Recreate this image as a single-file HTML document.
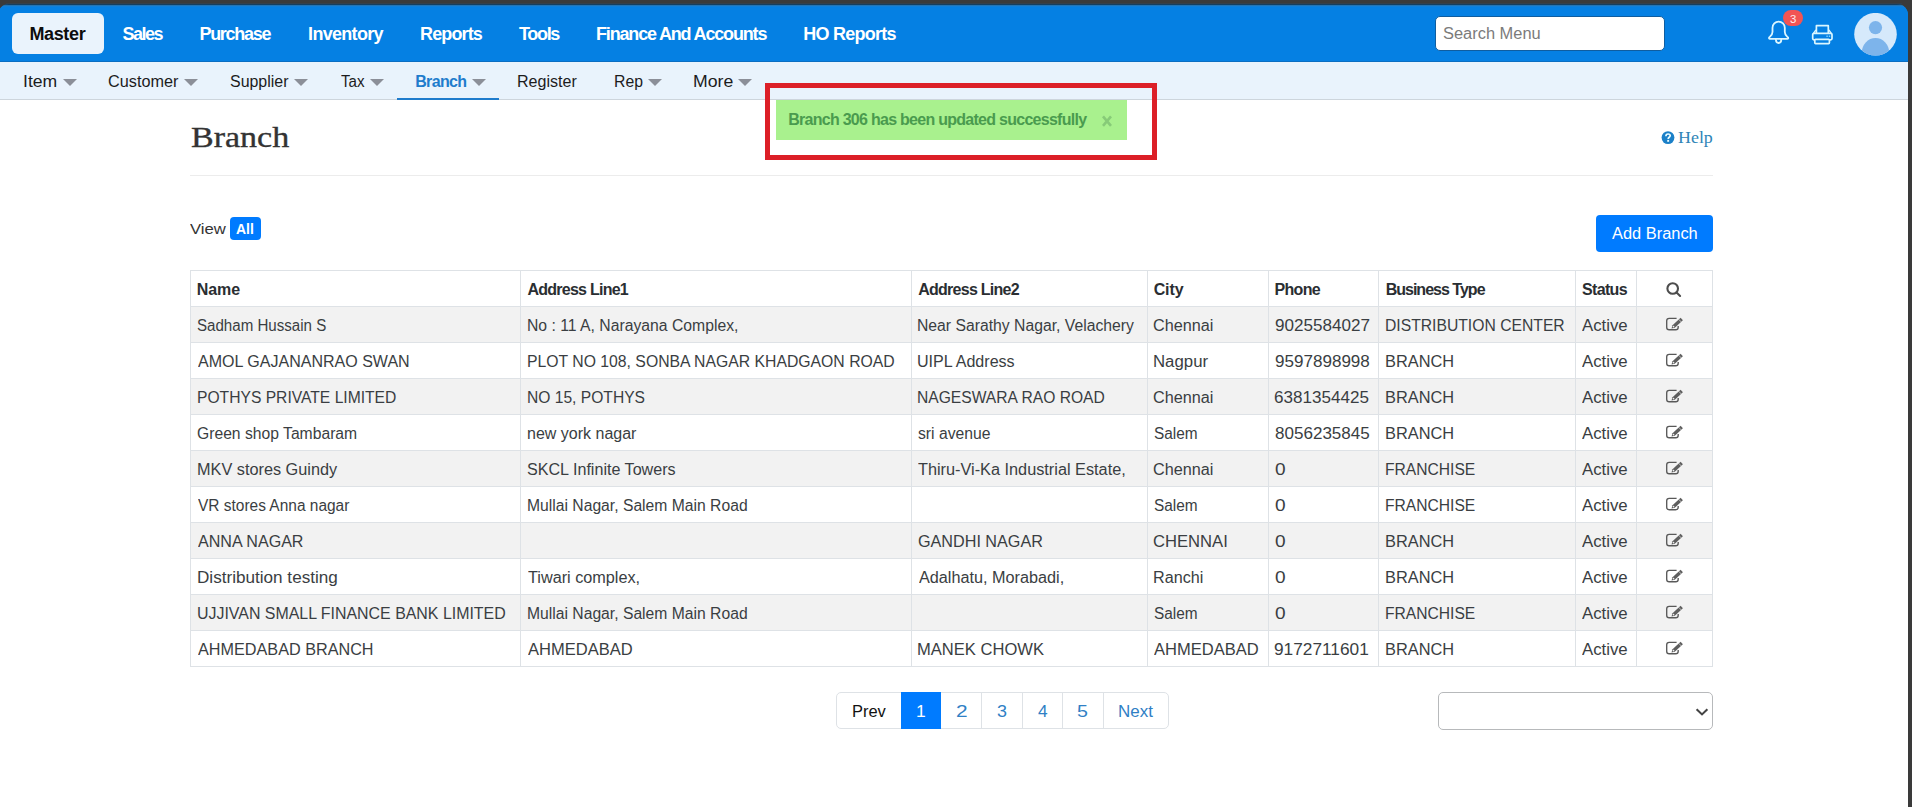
<!DOCTYPE html>
<html lang="en">
<head>
<meta charset="utf-8">
<title>Branch</title>
<style>
*{box-sizing:border-box;margin:0;padding:0}
html,body{width:1912px;height:807px;overflow:hidden;background:#3a3a3a;font-family:"Liberation Sans",sans-serif}
#page{position:absolute;left:-2px;top:4px;width:1910px;height:803px;background:linear-gradient(to bottom,#0e5fa6 0,#0580e3 3px,#0580e3 40px,#fff 40px);border-radius:11px 11px 0 0;overflow:hidden}
#shade{position:absolute;left:6px;top:3px;width:1896px;height:1px;background:#34404b}
#wrap{position:absolute;left:0;top:0;width:1912px;height:807px}
.abs{position:absolute}
.t{position:absolute;white-space:nowrap;transform-origin:0 50%;display:block}
#nav{left:0;top:4px;width:1908px;height:58px;background:linear-gradient(to bottom,#143e60 0,#143e60 1px,#2474b2 1px,#2474b2 2px,#127fd8 2px,#127fd8 3px,#0580e3 3px);border-bottom:1px solid #0a6ec2}
#pill{left:12px;top:13px;width:92px;height:41px;border-radius:6px;background:#eaf3fc}
#search{left:1435px;top:16px;width:230px;height:35px;border-radius:5px;background:#fff;border:1px solid #0f5d9f}
#sub{left:0;top:62px;width:1908px;height:38px;background:#e9f3fc;border-bottom:1px solid #cdd5dc}
.car{position:absolute;top:79px;width:0;height:0;border-left:7px solid transparent;border-right:7px solid transparent;border-top:7px solid #8b8f98}
#ul{left:397px;top:98px;width:102px;height:2px;background:#1f7ccc}
#hr{left:190px;top:175px;width:1523px;height:1px;background:#ececec}
#toast{left:776px;top:100px;width:351px;height:40px;background:#a9f18e}
#red{left:765px;top:83px;width:392px;height:77px;border:5px solid #dc1f27}
#all{left:230px;top:217px;width:31px;height:23px;border-radius:4px;background:#007bff}
#add{left:1596px;top:215px;width:117px;height:37px;border-radius:4px;background:#007bff}
#grid{left:190px;top:270px;border-collapse:collapse;table-layout:fixed;width:1522px}
#grid td{border:1px solid #dee2e6;height:36px}
#grid tr:nth-child(even) td{background:#f2f2f2}
#pg{left:836px;top:692px;width:333px;height:37px;border:1px solid #dee2e6;border-radius:5px;background:#fff}
#pg i{position:absolute;top:0;width:1px;height:35px;background:#dee2e6}
#p1{left:901px;top:692px;width:40px;height:37px;background:#007bff}
#sel{left:1438px;top:692px;width:275px;height:38px;border:1px solid #b7b9bb;border-radius:5px;background:#fff}
.hd{-webkit-text-stroke:0.35px #333}
#badge{left:1783px;top:10px;width:20px;height:16px;border-radius:8px;background:#f25454}
</style>
</head>
<body>
<div id="wrap">
<div id="shade"></div>
<div id="page"><div id="wrap2" class="abs" style="left:2px;top:-4px;width:1912px;height:807px">
<div id="nav" class="abs"></div>
<div id="pill" class="abs"></div>
<div id="search" class="abs"></div>
<!-- bell -->
<svg class="abs" style="left:1766px;top:19px" width="26" height="28" viewBox="0 0 26 28" fill="none" stroke="#dbf6ff" stroke-width="1.8" stroke-linejoin="round" stroke-linecap="round">
<path d="M6.5 13 V8.8 A6.15 6.15 0 0 1 18.8 8.8 V13 C18.8 16 20.5 17 22 18.4 Q22.6 19.8 21.4 19.8 H3.9 Q2.6 19.8 3.2 18.4 C4.8 17 6.5 16 6.5 13 Z"/>
<path d="M9.9 20.6 C9.9 23 11 24 12.6 24 C14.2 24 15.3 23 15.3 20.6"/>
</svg>
<div id="badge" class="abs"></div>
<!-- printer -->
<svg class="abs" style="left:1810px;top:23px" width="25" height="24" viewBox="0 0 25 24" fill="none" stroke="#dbf6ff" stroke-width="1.7" stroke-linejoin="round">
<path d="M6.4 10 V2.7 H18.3 V10"/>
<path d="M5.9 6.8 L3.4 10.3 M18.8 6.8 L21.3 10.3" stroke-width="1.4"/>
<rect x="2.7" y="10.3" width="19.3" height="6.5" rx="1.3"/>
<rect x="4.8" y="16.4" width="14.6" height="4.2" rx="0.8" fill="#0580e3"/>
<path d="M16.4 13.2 H17.8 M18.8 13.2 H20.2" stroke-width="1.5" stroke="#7fd0fb"/>
</svg>
<!-- avatar -->
<svg class="abs" style="left:1854px;top:13px" width="43" height="43" viewBox="0 0 43 43">
<defs><clipPath id="cp"><circle cx="21.5" cy="21.2" r="21.3"/></clipPath></defs>
<circle cx="21.5" cy="21.2" r="21.3" fill="#d6e9fb"/>
<g clip-path="url(#cp)" fill="#7db4eb"><circle cx="21.5" cy="14.6" r="6.6"/><ellipse cx="21.5" cy="40" rx="13.8" ry="15"/></g>
</svg>
<div id="sub" class="abs"></div>
<div class="car" style="left:62.5px"></div>
<div class="car" style="left:184px"></div>
<div class="car" style="left:294.3px"></div>
<div class="car" style="left:369.5px"></div>
<div class="car" style="left:471.5px"></div>
<div class="car" style="left:648px"></div>
<div class="car" style="left:738px"></div>
<div id="ul" class="abs"></div>
<div id="hr" class="abs"></div>
<!-- help icon -->
<svg class="abs" style="left:1661px;top:131px" width="14" height="14" viewBox="0 0 14 14">
<circle cx="7" cy="6.6" r="6.4" fill="#1b80c8"/>
<path d="M4.9 5.2 C4.9 3.6 6 3 7.1 3 C8.3 3 9.2 3.7 9.2 4.8 C9.2 6.3 7.2 6.3 7.2 7.9" fill="none" stroke="#e8fbff" stroke-width="1.7"/>
<rect x="6.2" y="8.9" width="1.9" height="1.9" fill="#e8fbff"/>
</svg>
<div id="toast" class="abs"></div>
<svg class="abs" style="left:1100px;top:114px" width="14" height="14" viewBox="0 0 14 14" stroke="#87cb78" stroke-width="2.6" stroke-linecap="butt"><path d="M3 2.4 L11 11.9 M11 2.4 L3 11.9"/></svg>
<div id="red" class="abs"></div>
<div id="all" class="abs"></div>
<div id="add" class="abs"></div>
<table id="grid" class="abs">
<colgroup><col style="width:330px"><col style="width:391px"><col style="width:236px"><col style="width:121px"><col style="width:110px"><col style="width:197px"><col style="width:61px"><col style="width:76px"></colgroup>
<tr><td></td><td></td><td></td><td></td><td></td><td></td><td></td><td></td></tr>
<tr><td></td><td></td><td></td><td></td><td></td><td></td><td></td><td></td></tr>
<tr><td></td><td></td><td></td><td></td><td></td><td></td><td></td><td></td></tr>
<tr><td></td><td></td><td></td><td></td><td></td><td></td><td></td><td></td></tr>
<tr><td></td><td></td><td></td><td></td><td></td><td></td><td></td><td></td></tr>
<tr><td></td><td></td><td></td><td></td><td></td><td></td><td></td><td></td></tr>
<tr><td></td><td></td><td></td><td></td><td></td><td></td><td></td><td></td></tr>
<tr><td></td><td></td><td></td><td></td><td></td><td></td><td></td><td></td></tr>
<tr><td></td><td></td><td></td><td></td><td></td><td></td><td></td><td></td></tr>
<tr><td></td><td></td><td></td><td></td><td></td><td></td><td></td><td></td></tr>
<tr><td></td><td></td><td></td><td></td><td></td><td></td><td></td><td></td></tr>
</table>
<svg class="abs" style="left:1665px;top:281px" width="18" height="18" viewBox="0 0 18 18" fill="none" stroke="#4d4d4d" stroke-width="2.1"><circle cx="7.7" cy="7.5" r="5.3"/><path d="M11.6 11.4 L15.1 14.9" stroke-linecap="round"/></svg>
<svg class="abs" style="left:1665px;top:316px" width="19" height="16" viewBox="0 0 19 16" fill="none" stroke="#595959" stroke-width="1.35"><path d="M11.6 2.3 H4.2 Q1.7 2.3 1.7 4.8 V11.2 Q1.7 13.75 4.2 13.75 H10.7 Q13.2 13.75 13.2 11.2 V9.9"/><path d="M6.5 12.4 L9.77 11.68 L17.9 4.29 L15.63 1.77 L7.49 9.16 Z" fill="#5e5e5e" stroke="none"/><path d="M13.85 3.38 L16.13 5.9" stroke="#fff" stroke-opacity=".85" stroke-width=".7"/><circle cx="8.5" cy="10.55" r=".85" fill="#fff" fill-opacity=".9" stroke="none"/></svg>
<svg class="abs" style="left:1665px;top:352px" width="19" height="16" viewBox="0 0 19 16" fill="none" stroke="#595959" stroke-width="1.35"><path d="M11.6 2.3 H4.2 Q1.7 2.3 1.7 4.8 V11.2 Q1.7 13.75 4.2 13.75 H10.7 Q13.2 13.75 13.2 11.2 V9.9"/><path d="M6.5 12.4 L9.77 11.68 L17.9 4.29 L15.63 1.77 L7.49 9.16 Z" fill="#5e5e5e" stroke="none"/><path d="M13.85 3.38 L16.13 5.9" stroke="#fff" stroke-opacity=".85" stroke-width=".7"/><circle cx="8.5" cy="10.55" r=".85" fill="#fff" fill-opacity=".9" stroke="none"/></svg>
<svg class="abs" style="left:1665px;top:388px" width="19" height="16" viewBox="0 0 19 16" fill="none" stroke="#595959" stroke-width="1.35"><path d="M11.6 2.3 H4.2 Q1.7 2.3 1.7 4.8 V11.2 Q1.7 13.75 4.2 13.75 H10.7 Q13.2 13.75 13.2 11.2 V9.9"/><path d="M6.5 12.4 L9.77 11.68 L17.9 4.29 L15.63 1.77 L7.49 9.16 Z" fill="#5e5e5e" stroke="none"/><path d="M13.85 3.38 L16.13 5.9" stroke="#fff" stroke-opacity=".85" stroke-width=".7"/><circle cx="8.5" cy="10.55" r=".85" fill="#fff" fill-opacity=".9" stroke="none"/></svg>
<svg class="abs" style="left:1665px;top:424px" width="19" height="16" viewBox="0 0 19 16" fill="none" stroke="#595959" stroke-width="1.35"><path d="M11.6 2.3 H4.2 Q1.7 2.3 1.7 4.8 V11.2 Q1.7 13.75 4.2 13.75 H10.7 Q13.2 13.75 13.2 11.2 V9.9"/><path d="M6.5 12.4 L9.77 11.68 L17.9 4.29 L15.63 1.77 L7.49 9.16 Z" fill="#5e5e5e" stroke="none"/><path d="M13.85 3.38 L16.13 5.9" stroke="#fff" stroke-opacity=".85" stroke-width=".7"/><circle cx="8.5" cy="10.55" r=".85" fill="#fff" fill-opacity=".9" stroke="none"/></svg>
<svg class="abs" style="left:1665px;top:460px" width="19" height="16" viewBox="0 0 19 16" fill="none" stroke="#595959" stroke-width="1.35"><path d="M11.6 2.3 H4.2 Q1.7 2.3 1.7 4.8 V11.2 Q1.7 13.75 4.2 13.75 H10.7 Q13.2 13.75 13.2 11.2 V9.9"/><path d="M6.5 12.4 L9.77 11.68 L17.9 4.29 L15.63 1.77 L7.49 9.16 Z" fill="#5e5e5e" stroke="none"/><path d="M13.85 3.38 L16.13 5.9" stroke="#fff" stroke-opacity=".85" stroke-width=".7"/><circle cx="8.5" cy="10.55" r=".85" fill="#fff" fill-opacity=".9" stroke="none"/></svg>
<svg class="abs" style="left:1665px;top:496px" width="19" height="16" viewBox="0 0 19 16" fill="none" stroke="#595959" stroke-width="1.35"><path d="M11.6 2.3 H4.2 Q1.7 2.3 1.7 4.8 V11.2 Q1.7 13.75 4.2 13.75 H10.7 Q13.2 13.75 13.2 11.2 V9.9"/><path d="M6.5 12.4 L9.77 11.68 L17.9 4.29 L15.63 1.77 L7.49 9.16 Z" fill="#5e5e5e" stroke="none"/><path d="M13.85 3.38 L16.13 5.9" stroke="#fff" stroke-opacity=".85" stroke-width=".7"/><circle cx="8.5" cy="10.55" r=".85" fill="#fff" fill-opacity=".9" stroke="none"/></svg>
<svg class="abs" style="left:1665px;top:532px" width="19" height="16" viewBox="0 0 19 16" fill="none" stroke="#595959" stroke-width="1.35"><path d="M11.6 2.3 H4.2 Q1.7 2.3 1.7 4.8 V11.2 Q1.7 13.75 4.2 13.75 H10.7 Q13.2 13.75 13.2 11.2 V9.9"/><path d="M6.5 12.4 L9.77 11.68 L17.9 4.29 L15.63 1.77 L7.49 9.16 Z" fill="#5e5e5e" stroke="none"/><path d="M13.85 3.38 L16.13 5.9" stroke="#fff" stroke-opacity=".85" stroke-width=".7"/><circle cx="8.5" cy="10.55" r=".85" fill="#fff" fill-opacity=".9" stroke="none"/></svg>
<svg class="abs" style="left:1665px;top:568px" width="19" height="16" viewBox="0 0 19 16" fill="none" stroke="#595959" stroke-width="1.35"><path d="M11.6 2.3 H4.2 Q1.7 2.3 1.7 4.8 V11.2 Q1.7 13.75 4.2 13.75 H10.7 Q13.2 13.75 13.2 11.2 V9.9"/><path d="M6.5 12.4 L9.77 11.68 L17.9 4.29 L15.63 1.77 L7.49 9.16 Z" fill="#5e5e5e" stroke="none"/><path d="M13.85 3.38 L16.13 5.9" stroke="#fff" stroke-opacity=".85" stroke-width=".7"/><circle cx="8.5" cy="10.55" r=".85" fill="#fff" fill-opacity=".9" stroke="none"/></svg>
<svg class="abs" style="left:1665px;top:604px" width="19" height="16" viewBox="0 0 19 16" fill="none" stroke="#595959" stroke-width="1.35"><path d="M11.6 2.3 H4.2 Q1.7 2.3 1.7 4.8 V11.2 Q1.7 13.75 4.2 13.75 H10.7 Q13.2 13.75 13.2 11.2 V9.9"/><path d="M6.5 12.4 L9.77 11.68 L17.9 4.29 L15.63 1.77 L7.49 9.16 Z" fill="#5e5e5e" stroke="none"/><path d="M13.85 3.38 L16.13 5.9" stroke="#fff" stroke-opacity=".85" stroke-width=".7"/><circle cx="8.5" cy="10.55" r=".85" fill="#fff" fill-opacity=".9" stroke="none"/></svg>
<svg class="abs" style="left:1665px;top:640px" width="19" height="16" viewBox="0 0 19 16" fill="none" stroke="#595959" stroke-width="1.35"><path d="M11.6 2.3 H4.2 Q1.7 2.3 1.7 4.8 V11.2 Q1.7 13.75 4.2 13.75 H10.7 Q13.2 13.75 13.2 11.2 V9.9"/><path d="M6.5 12.4 L9.77 11.68 L17.9 4.29 L15.63 1.77 L7.49 9.16 Z" fill="#5e5e5e" stroke="none"/><path d="M13.85 3.38 L16.13 5.9" stroke="#fff" stroke-opacity=".85" stroke-width=".7"/><circle cx="8.5" cy="10.55" r=".85" fill="#fff" fill-opacity=".9" stroke="none"/></svg>
<div id="pg" class="abs"><i style="left:144px"></i><i style="left:185px"></i><i style="left:225px"></i><i style="left:266px"></i></div>
<div id="p1" class="abs"></div>
<div id="sel" class="abs"></div>
<svg class="abs" style="left:1694px;top:706px" width="16" height="12" viewBox="0 0 16 12" fill="none" stroke="#444" stroke-width="2.1"><path d="M2.6 3.2 L8 8.4 L13.4 3.2"/></svg>
<span class="t" style="left:29.40px;top:24.86px;font:bold 18px/18px 'Liberation Sans';color:#0d0d0d;letter-spacing:-0.350px">Master</span>
<span class="t" style="left:122.48px;top:24.86px;font:bold 18px/18px 'Liberation Sans';color:#ffffff;letter-spacing:-1.521px">Sales</span>
<span class="t" style="left:199.40px;top:24.86px;font:bold 18px/18px 'Liberation Sans';color:#ffffff;letter-spacing:-1.261px">Purchase</span>
<span class="t" style="left:308.10px;top:24.86px;font:bold 18px/18px 'Liberation Sans';color:#ffffff;letter-spacing:-0.702px">Inventory</span>
<span class="t" style="left:420.00px;top:24.86px;font:bold 18px/18px 'Liberation Sans';color:#ffffff;letter-spacing:-0.861px">Reports</span>
<span class="t" style="left:518.90px;top:24.86px;font:bold 18px/18px 'Liberation Sans';color:#ffffff;letter-spacing:-1.305px">Tools</span>
<span class="t" style="left:596.00px;top:24.86px;font:bold 18px/18px 'Liberation Sans';color:#ffffff;letter-spacing:-1.173px">Finance And Accounts</span>
<span class="t" style="left:803.20px;top:24.86px;font:bold 18px/18px 'Liberation Sans';color:#ffffff;letter-spacing:-0.741px">HO Reports</span>
<span class="t" style="left:23.18px;top:74.26px;font:normal 16px/16px 'Liberation Sans';color:#1c1c1c;transform:scaleX(1.0984)">Item</span>
<span class="t" style="left:107.88px;top:74.26px;font:normal 16px/16px 'Liberation Sans';color:#1c1c1c;transform:scaleX(1.0150)">Customer</span>
<span class="t" style="left:229.98px;top:74.26px;font:normal 16px/16px 'Liberation Sans';color:#1c1c1c;transform:scaleX(0.9963)">Supplier</span>
<span class="t" style="left:340.86px;top:74.26px;font:normal 16px/16px 'Liberation Sans';color:#1c1c1c;transform:scaleX(0.9439)">Tax</span>
<span class="t" style="left:517.08px;top:74.26px;font:normal 16px/16px 'Liberation Sans';color:#1c1c1c;transform:scaleX(1.0034)">Register</span>
<span class="t" style="left:614.21px;top:74.26px;font:normal 16px/16px 'Liberation Sans';color:#1c1c1c;transform:scaleX(0.9866)">Rep</span>
<span class="t" style="left:693.15px;top:74.26px;font:normal 16px/16px 'Liberation Sans';color:#1c1c1c;transform:scaleX(1.1037)">More</span>
<span class="t" style="left:415.13px;top:74.26px;font:bold 16px/16px 'Liberation Sans';color:#1f7ccc;letter-spacing:-0.632px">Branch</span>
<span class="t" style="left:1443.45px;top:26.46px;font:normal 16px/16px 'Liberation Sans';color:#7b7b7b;transform:scaleX(1.0260)">Search Menu</span>
<span class="t" style="left:1790.47px;top:13.79px;font:normal 11px/11px 'Liberation Sans';color:#ffecec;transform:scaleX(1.0354)">3</span>
<span class="t hd" style="left:190.82px;top:121.88px;font:normal 30px/30px 'Liberation Serif';color:#333333;transform:scaleX(1.1339)">Branch</span>
<span class="t" style="left:1678.38px;top:129.93px;font:normal 16.2px/16.2px 'Liberation Serif';color:#2f85b7;transform:scaleX(1.1065)">Help</span>
<span class="t" style="left:788.23px;top:112.26px;font:bold 16px/16px 'Liberation Sans';color:#4a9b4e;letter-spacing:-0.728px">Branch 306 has been updated successfully</span>
<span class="t" style="left:190.33px;top:221.48px;font:normal 15.5px/15.5px 'Liberation Sans';color:#333333;transform:scaleX(1.0755)">View</span>
<span class="t" style="left:236.35px;top:222.33px;font:bold 14.5px/14.5px 'Liberation Sans';color:#ffffff;transform:scaleX(0.9626)">All</span>
<span class="t" style="left:1611.57px;top:226.06px;font:normal 16px/16px 'Liberation Sans';color:#ffffff;transform:scaleX(1.0250)">Add Branch</span>
<span class="t" style="left:851.95px;top:704.26px;font:normal 16px/16px 'Liberation Sans';color:#111111;transform:scaleX(1.0276)">Prev</span>
<span class="t" style="left:916.37px;top:704.26px;font:normal 16px/16px 'Liberation Sans';color:#ffffff;transform:scaleX(1.0872)">1</span>
<span class="t" style="left:955.75px;top:704.26px;font:normal 16px/16px 'Liberation Sans';color:#2f80c5;transform:scaleX(1.3033)">2</span>
<span class="t" style="left:997.22px;top:704.26px;font:normal 16px/16px 'Liberation Sans';color:#2f80c5;transform:scaleX(1.1205)">3</span>
<span class="t" style="left:1037.80px;top:704.26px;font:normal 16px/16px 'Liberation Sans';color:#2f80c5;transform:scaleX(1.0791)">4</span>
<span class="t" style="left:1077.11px;top:704.26px;font:normal 16px/16px 'Liberation Sans';color:#2f80c5;transform:scaleX(1.2260)">5</span>
<span class="t" style="left:1118.31px;top:704.26px;font:normal 16px/16px 'Liberation Sans';color:#2f80c5;transform:scaleX(1.0614)">Next</span>
<span class="t" style="left:196.83px;top:282.26px;font:bold 16px/16px 'Liberation Sans';color:#2a2e32;letter-spacing:-0.120px">Name</span>
<span class="t" style="left:527.50px;top:282.26px;font:bold 16px/16px 'Liberation Sans';color:#2a2e32;letter-spacing:-0.751px">Address Line1</span>
<span class="t" style="left:918.20px;top:282.26px;font:bold 16px/16px 'Liberation Sans';color:#2a2e32;letter-spacing:-0.735px">Address Line2</span>
<span class="t" style="left:1153.64px;top:282.26px;font:bold 16px/16px 'Liberation Sans';color:#2a2e32;letter-spacing:-0.061px">City</span>
<span class="t" style="left:1274.53px;top:282.26px;font:bold 16px/16px 'Liberation Sans';color:#2a2e32;letter-spacing:-0.668px">Phone</span>
<span class="t" style="left:1385.63px;top:282.26px;font:bold 16px/16px 'Liberation Sans';color:#2a2e32;letter-spacing:-0.985px">Business Type</span>
<span class="t" style="left:1581.94px;top:282.26px;font:bold 16px/16px 'Liberation Sans';color:#2a2e32;letter-spacing:-0.636px">Status</span>
<span class="t" style="left:197.21px;top:318.26px;font:normal 16px/16px 'Liberation Sans';color:#3a3e42;transform:scaleX(0.9439)">Sadham Hussain S</span>
<span class="t" style="left:526.61px;top:318.26px;font:normal 16px/16px 'Liberation Sans';color:#3a3e42;transform:scaleX(0.9838)">No : 11 A, Narayana Complex,</span>
<span class="t" style="left:917.31px;top:318.26px;font:normal 16px/16px 'Liberation Sans';color:#3a3e42;transform:scaleX(0.9835)">Near Sarathy Nagar, Velachery</span>
<span class="t" style="left:1153.48px;top:318.26px;font:normal 16px/16px 'Liberation Sans';color:#3a3e42;transform:scaleX(1.0137)">Chennai</span>
<span class="t" style="left:1274.50px;top:318.26px;font:normal 16px/16px 'Liberation Sans';color:#3a3e42;transform:scaleX(1.0671)">9025584027</span>
<span class="t" style="left:1384.61px;top:318.26px;font:normal 16px/16px 'Liberation Sans';color:#3a3e42;transform:scaleX(0.9814)">DISTRIBUTION CENTER</span>
<span class="t" style="left:1582.37px;top:318.26px;font:normal 16px/16px 'Liberation Sans';color:#3a3e42;transform:scaleX(1.0484)">Active</span>
<span class="t" style="left:197.87px;top:354.26px;font:normal 16px/16px 'Liberation Sans';color:#3a3e42;transform:scaleX(1.0017)">AMOL GAJANANRAO SWAN</span>
<span class="t" style="left:526.61px;top:354.26px;font:normal 16px/16px 'Liberation Sans';color:#3a3e42;transform:scaleX(0.9854)">PLOT NO 108, SONBA NAGAR KHADGAON ROAD</span>
<span class="t" style="left:917.36px;top:354.26px;font:normal 16px/16px 'Liberation Sans';color:#3a3e42;transform:scaleX(1.0041)">UIPL Address</span>
<span class="t" style="left:1152.92px;top:354.26px;font:normal 16px/16px 'Liberation Sans';color:#3a3e42;transform:scaleX(1.0491)">Nagpur</span>
<span class="t" style="left:1274.50px;top:354.26px;font:normal 16px/16px 'Liberation Sans';color:#3a3e42;transform:scaleX(1.0658)">9597898998</span>
<span class="t" style="left:1384.56px;top:354.26px;font:normal 16px/16px 'Liberation Sans';color:#3a3e42;transform:scaleX(1.0224)">BRANCH</span>
<span class="t" style="left:1582.37px;top:354.26px;font:normal 16px/16px 'Liberation Sans';color:#3a3e42;transform:scaleX(1.0484)">Active</span>
<span class="t" style="left:196.62px;top:390.26px;font:normal 16px/16px 'Liberation Sans';color:#3a3e42;transform:scaleX(0.9777)">POTHYS PRIVATE LIMITED</span>
<span class="t" style="left:526.62px;top:390.26px;font:normal 16px/16px 'Liberation Sans';color:#3a3e42;transform:scaleX(0.9758)">NO 15, POTHYS</span>
<span class="t" style="left:917.32px;top:390.26px;font:normal 16px/16px 'Liberation Sans';color:#3a3e42;transform:scaleX(0.9763)">NAGESWARA RAO ROAD</span>
<span class="t" style="left:1153.48px;top:390.26px;font:normal 16px/16px 'Liberation Sans';color:#3a3e42;transform:scaleX(1.0137)">Chennai</span>
<span class="t" style="left:1274.43px;top:390.26px;font:normal 16px/16px 'Liberation Sans';color:#3a3e42;transform:scaleX(1.0663)">6381354425</span>
<span class="t" style="left:1384.56px;top:390.26px;font:normal 16px/16px 'Liberation Sans';color:#3a3e42;transform:scaleX(1.0224)">BRANCH</span>
<span class="t" style="left:1582.37px;top:390.26px;font:normal 16px/16px 'Liberation Sans';color:#3a3e42;transform:scaleX(1.0484)">Active</span>
<span class="t" style="left:197.11px;top:426.26px;font:normal 16px/16px 'Liberation Sans';color:#3a3e42;transform:scaleX(0.9804)">Green shop Tambaram</span>
<span class="t" style="left:526.84px;top:426.26px;font:normal 16px/16px 'Liberation Sans';color:#3a3e42;transform:scaleX(1.0003)">new york nagar</span>
<span class="t" style="left:918.16px;top:426.26px;font:normal 16px/16px 'Liberation Sans';color:#3a3e42;transform:scaleX(0.9826)">sri avenue</span>
<span class="t" style="left:1153.60px;top:426.26px;font:normal 16px/16px 'Liberation Sans';color:#3a3e42;transform:scaleX(0.9617)">Salem</span>
<span class="t" style="left:1274.56px;top:426.26px;font:normal 16px/16px 'Liberation Sans';color:#3a3e42;transform:scaleX(1.0649)">8056235845</span>
<span class="t" style="left:1384.56px;top:426.26px;font:normal 16px/16px 'Liberation Sans';color:#3a3e42;transform:scaleX(1.0224)">BRANCH</span>
<span class="t" style="left:1582.37px;top:426.26px;font:normal 16px/16px 'Liberation Sans';color:#3a3e42;transform:scaleX(1.0484)">Active</span>
<span class="t" style="left:196.57px;top:462.26px;font:normal 16px/16px 'Liberation Sans';color:#3a3e42;transform:scaleX(1.0170)">MKV stores Guindy</span>
<span class="t" style="left:527.17px;top:462.26px;font:normal 16px/16px 'Liberation Sans';color:#3a3e42;transform:scaleX(1.0068)">SKCL Infinite Towers</span>
<span class="t" style="left:918.23px;top:462.26px;font:normal 16px/16px 'Liberation Sans';color:#3a3e42;transform:scaleX(1.0171)">Thiru-Vi-Ka Industrial Estate,</span>
<span class="t" style="left:1153.48px;top:462.26px;font:normal 16px/16px 'Liberation Sans';color:#3a3e42;transform:scaleX(1.0137)">Chennai</span>
<span class="t" style="left:1274.56px;top:462.26px;font:normal 16px/16px 'Liberation Sans';color:#3a3e42;transform:scaleX(1.1898)">0</span>
<span class="t" style="left:1384.62px;top:462.26px;font:normal 16px/16px 'Liberation Sans';color:#3a3e42;transform:scaleX(0.9762)">FRANCHISE</span>
<span class="t" style="left:1582.37px;top:462.26px;font:normal 16px/16px 'Liberation Sans';color:#3a3e42;transform:scaleX(1.0484)">Active</span>
<span class="t" style="left:197.83px;top:498.26px;font:normal 16px/16px 'Liberation Sans';color:#3a3e42;transform:scaleX(0.9670)">VR stores Anna nagar</span>
<span class="t" style="left:526.61px;top:498.26px;font:normal 16px/16px 'Liberation Sans';color:#3a3e42;transform:scaleX(0.9805)">Mullai Nagar, Salem Main Road</span>
<span class="t" style="left:1153.60px;top:498.26px;font:normal 16px/16px 'Liberation Sans';color:#3a3e42;transform:scaleX(0.9617)">Salem</span>
<span class="t" style="left:1274.56px;top:498.26px;font:normal 16px/16px 'Liberation Sans';color:#3a3e42;transform:scaleX(1.1898)">0</span>
<span class="t" style="left:1384.62px;top:498.26px;font:normal 16px/16px 'Liberation Sans';color:#3a3e42;transform:scaleX(0.9762)">FRANCHISE</span>
<span class="t" style="left:1582.37px;top:498.26px;font:normal 16px/16px 'Liberation Sans';color:#3a3e42;transform:scaleX(1.0484)">Active</span>
<span class="t" style="left:197.87px;top:534.26px;font:normal 16px/16px 'Liberation Sans';color:#3a3e42;transform:scaleX(1.0055)">ANNA NAGAR</span>
<span class="t" style="left:917.79px;top:534.26px;font:normal 16px/16px 'Liberation Sans';color:#3a3e42;transform:scaleX(1.0105)">GANDHI NAGAR</span>
<span class="t" style="left:1153.46px;top:534.26px;font:normal 16px/16px 'Liberation Sans';color:#3a3e42;transform:scaleX(1.0385)">CHENNAI</span>
<span class="t" style="left:1274.56px;top:534.26px;font:normal 16px/16px 'Liberation Sans';color:#3a3e42;transform:scaleX(1.1898)">0</span>
<span class="t" style="left:1384.56px;top:534.26px;font:normal 16px/16px 'Liberation Sans';color:#3a3e42;transform:scaleX(1.0224)">BRANCH</span>
<span class="t" style="left:1582.37px;top:534.26px;font:normal 16px/16px 'Liberation Sans';color:#3a3e42;transform:scaleX(1.0484)">Active</span>
<span class="t" style="left:196.50px;top:570.26px;font:normal 16px/16px 'Liberation Sans';color:#3a3e42;transform:scaleX(1.0698)">Distribution testing</span>
<span class="t" style="left:527.54px;top:570.26px;font:normal 16px/16px 'Liberation Sans';color:#3a3e42;transform:scaleX(1.0143)">Tiwari complex,</span>
<span class="t" style="left:918.57px;top:570.26px;font:normal 16px/16px 'Liberation Sans';color:#3a3e42;transform:scaleX(1.0139)">Adalhatu, Morabadi,</span>
<span class="t" style="left:1152.97px;top:570.26px;font:normal 16px/16px 'Liberation Sans';color:#3a3e42;transform:scaleX(1.0102)">Ranchi</span>
<span class="t" style="left:1274.56px;top:570.26px;font:normal 16px/16px 'Liberation Sans';color:#3a3e42;transform:scaleX(1.1898)">0</span>
<span class="t" style="left:1384.56px;top:570.26px;font:normal 16px/16px 'Liberation Sans';color:#3a3e42;transform:scaleX(1.0224)">BRANCH</span>
<span class="t" style="left:1582.37px;top:570.26px;font:normal 16px/16px 'Liberation Sans';color:#3a3e42;transform:scaleX(1.0484)">Active</span>
<span class="t" style="left:196.67px;top:606.26px;font:normal 16px/16px 'Liberation Sans';color:#3a3e42;transform:scaleX(0.9949)">UJJIVAN SMALL FINANCE BANK LIMITED</span>
<span class="t" style="left:526.61px;top:606.26px;font:normal 16px/16px 'Liberation Sans';color:#3a3e42;transform:scaleX(0.9805)">Mullai Nagar, Salem Main Road</span>
<span class="t" style="left:1153.60px;top:606.26px;font:normal 16px/16px 'Liberation Sans';color:#3a3e42;transform:scaleX(0.9617)">Salem</span>
<span class="t" style="left:1274.56px;top:606.26px;font:normal 16px/16px 'Liberation Sans';color:#3a3e42;transform:scaleX(1.1898)">0</span>
<span class="t" style="left:1384.62px;top:606.26px;font:normal 16px/16px 'Liberation Sans';color:#3a3e42;transform:scaleX(0.9762)">FRANCHISE</span>
<span class="t" style="left:1582.37px;top:606.26px;font:normal 16px/16px 'Liberation Sans';color:#3a3e42;transform:scaleX(1.0484)">Active</span>
<span class="t" style="left:197.87px;top:642.26px;font:normal 16px/16px 'Liberation Sans';color:#3a3e42;transform:scaleX(1.0127)">AHMEDABAD BRANCH</span>
<span class="t" style="left:527.87px;top:642.26px;font:normal 16px/16px 'Liberation Sans';color:#3a3e42;transform:scaleX(1.0323)">AHMEDABAD</span>
<span class="t" style="left:917.24px;top:642.26px;font:normal 16px/16px 'Liberation Sans';color:#3a3e42;transform:scaleX(1.0348)">MANEK CHOWK</span>
<span class="t" style="left:1154.27px;top:642.26px;font:normal 16px/16px 'Liberation Sans';color:#3a3e42;transform:scaleX(1.0323)">AHMEDABAD</span>
<span class="t" style="left:1274.49px;top:642.26px;font:normal 16px/16px 'Liberation Sans';color:#3a3e42;transform:scaleX(1.0792)">9172711601</span>
<span class="t" style="left:1384.56px;top:642.26px;font:normal 16px/16px 'Liberation Sans';color:#3a3e42;transform:scaleX(1.0224)">BRANCH</span>
<span class="t" style="left:1582.37px;top:642.26px;font:normal 16px/16px 'Liberation Sans';color:#3a3e42;transform:scaleX(1.0484)">Active</span>
</div></div>
</div>
</body>
</html>
